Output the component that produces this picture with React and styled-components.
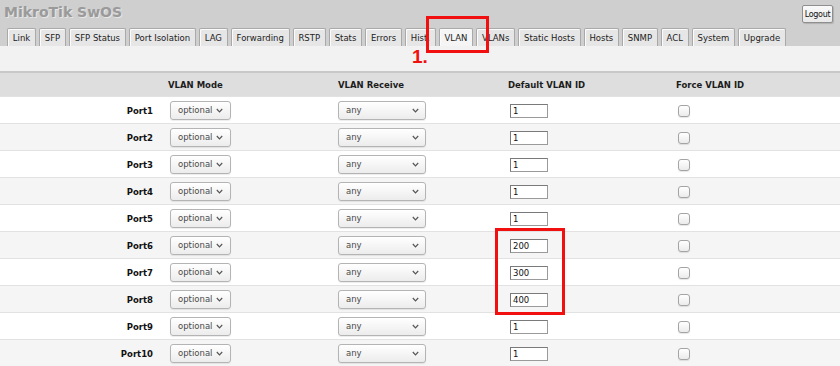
import React from 'react';
import styled, { createGlobalStyle } from 'styled-components';

const GlobalStyle = createGlobalStyle`
  body {
    margin: 0;
    background: #ffffff;
    font-family: "DejaVu Sans", Verdana, sans-serif;
    font-size: 8.5px;
    color: #222;
    overflow: hidden;
  }
`;

const Page = styled.div`
  position: relative;
  width: 840px;
  height: 366px;
  overflow: hidden;
`;

const Header = styled.div`
  background: #cfcfcf;
  height: 46px;
  display: flex;
  flex-direction: column;
`;

const TitleRow = styled.div`
  display: flex;
  justify-content: space-between;
  align-items: flex-start;
  height: 28px;
  padding: 3px 7px 0 4px;
  box-sizing: border-box;
`;

const Title = styled.div`
  font-size: 14px;
  font-weight: bold;
  line-height: 18px;
  color: #9a9a9a;
  text-shadow: 1px 1px 0 #e6e6e6;
`;

const LogoutButton = styled.button`
  margin-top: 2px;
  height: 18px;
  width: 31px;
  padding: 0;
  font-family: "DejaVu Sans", Verdana, sans-serif;
  font-size: 8px;
  letter-spacing: -0.3px;
  color: #111;
  background: linear-gradient(#fafafa, #e9e9e9);
  border: 1px solid #8f8f8f;
  border-radius: 2px;
  box-shadow: 1px 1px 1px rgba(0, 0, 0, 0.15);
`;

const Tabs = styled.div`
  display: flex;
  align-items: flex-end;
  gap: 3px;
  height: 18px;
  padding-left: 7px;
`;

const Tab = styled.div`
  height: 18px;
  box-sizing: border-box;
  padding: 1px 4.8px 0;
  display: flex;
  align-items: center;
  border: 1px solid #a9a9a9;
  border-bottom: none;
  border-radius: 2px 2px 0 0;
  background: ${p => (p.$active ? '#f5f5f5' : '#e6e6e6')};
  box-shadow: inset 1px 1px 0 #fbfbfb;
  color: #222;
  white-space: nowrap;
`;

const Toolbar = styled.div`
  height: 25px;
  background: #f2f2f2;
`;

const Grid = styled.div`
  display: grid;
  grid-template-columns: 160px 170px 170px 168px 1fr;
  align-items: center;
`;

const HeadRow = styled(Grid)`
  height: 23px;
  background: #dedede;
  border-top: 2px solid #c8c8c8;
  border-bottom: 1px solid #e2e2e2;
  font-weight: bold;
  color: #1c1c1c;
`;

const HeadCell = styled.div`
  padding-left: 8px;
`;

const Row = styled(Grid)`
  height: 26px;
  background: ${p => (p.$shaded ? '#f5f5f5' : '#ffffff')};
  border-bottom: 1px solid #e2e2e2;
`;

const PortLabel = styled.div`
  text-align: right;
  padding: 1px 7px 0 0;
  font-weight: bold;
  color: #111;
`;

const Cell = styled.div`
  padding-left: ${p => p.$pad ?? 10}px;
  display: flex;
  align-items: center;
`;

const SelectBox = styled.div`
  width: ${p => p.$width}px;
  height: 19px;
  box-sizing: border-box;
  display: flex;
  align-items: center;
  justify-content: space-between;
  padding: 0 ${p => p.$padRight}px 0 7px;
  border: 1px solid #b4b4b4;
  border-radius: 3px;
  background: linear-gradient(#ffffff, #ececec);
  box-shadow: 0 1px 1px rgba(0, 0, 0, 0.08);
  color: #4a4a4a;
`;

const Chevron = () => (
  <svg width="7" height="5" viewBox="0 0 7 5">
    <path d="M0.8 1 L3.5 3.8 L6.2 1" fill="none" stroke="#555" strokeWidth="1.2" />
  </svg>
);

const IdInput = styled.div`
  width: 38px;
  height: 14px;
  box-sizing: border-box;
  margin-top: 1px;
  padding-left: 2px;
  display: flex;
  align-items: center;
  background: #fff;
  border: 1px solid #9a9a9a;
  border-top-color: #7a7a7a;
  border-left-color: #7a7a7a;
  color: #111;
`;

const Check = styled.div`
  width: 12px;
  height: 12px;
  box-sizing: border-box;
  margin-top: 2px;
  border: 1px solid #a4a4a4;
  border-radius: 3px;
  background: linear-gradient(#ffffff, #ebebeb);
  box-shadow: 0 1px 1px rgba(0, 0, 0, 0.1);
`;

const Highlight = styled.div`
  position: absolute;
  left: ${p => p.$x}px;
  top: ${p => p.$y}px;
  width: ${p => p.$w}px;
  height: ${p => p.$h}px;
  box-sizing: border-box;
  border: 3px solid #f20f0f;
`;

const StepLabel = styled.div`
  position: absolute;
  left: 412px;
  top: 46px;
  font-family: "Liberation Sans", Arial, sans-serif;
  font-weight: bold;
  font-size: 19px;
  color: #f20f0f;
`;

const tabs = [
  'Link', 'SFP', 'SFP Status', 'Port Isolation', 'LAG', 'Forwarding', 'RSTP',
  'Stats', 'Errors', 'Hist.', 'VLAN', 'VLANs', 'Static Hosts', 'Hosts', 'SNMP',
  'ACL', 'System', 'Upgrade',
];

const ports = [
  { name: 'Port1', id: '1' },
  { name: 'Port2', id: '1' },
  { name: 'Port3', id: '1' },
  { name: 'Port4', id: '1' },
  { name: 'Port5', id: '1' },
  { name: 'Port6', id: '200' },
  { name: 'Port7', id: '300' },
  { name: 'Port8', id: '400' },
  { name: 'Port9', id: '1' },
  { name: 'Port10', id: '1' },
];

const App = () => (
  <Page>
    <GlobalStyle />
    <Header>
      <TitleRow>
        <Title>MikroTik SwOS</Title>
        <LogoutButton>Logout</LogoutButton>
      </TitleRow>
      <Tabs>
        {tabs.map(t => (
          <Tab key={t} $active={t === 'VLAN'}>{t}</Tab>
        ))}
      </Tabs>
    </Header>
    <Toolbar />
    <HeadRow>
      <div />
      <HeadCell>VLAN Mode</HeadCell>
      <HeadCell>VLAN Receive</HeadCell>
      <HeadCell>Default VLAN ID</HeadCell>
      <HeadCell>Force VLAN ID</HeadCell>
    </HeadRow>
    {ports.map((p, i) => (
      <Row key={p.name} $shaded={i % 2 === 1}>
        <PortLabel>{p.name}</PortLabel>
        <Cell>
          <SelectBox $width={61} $padRight={7}>
            <span>optional</span>
            <Chevron />
          </SelectBox>
        </Cell>
        <Cell $pad={8}>
          <SelectBox $width={88} $padRight={6}>
            <span>any</span>
            <Chevron />
          </SelectBox>
        </Cell>
        <Cell>
          <IdInput>{p.id}</IdInput>
        </Cell>
        <Cell>
          <Check />
        </Cell>
      </Row>
    ))}
    <Highlight $x={426} $y={16} $w={63} $h={37} />
    <StepLabel>1.</StepLabel>
    <Highlight $x={495} $y={228} $w={70} $h={87} />
  </Page>
);

export default App;
